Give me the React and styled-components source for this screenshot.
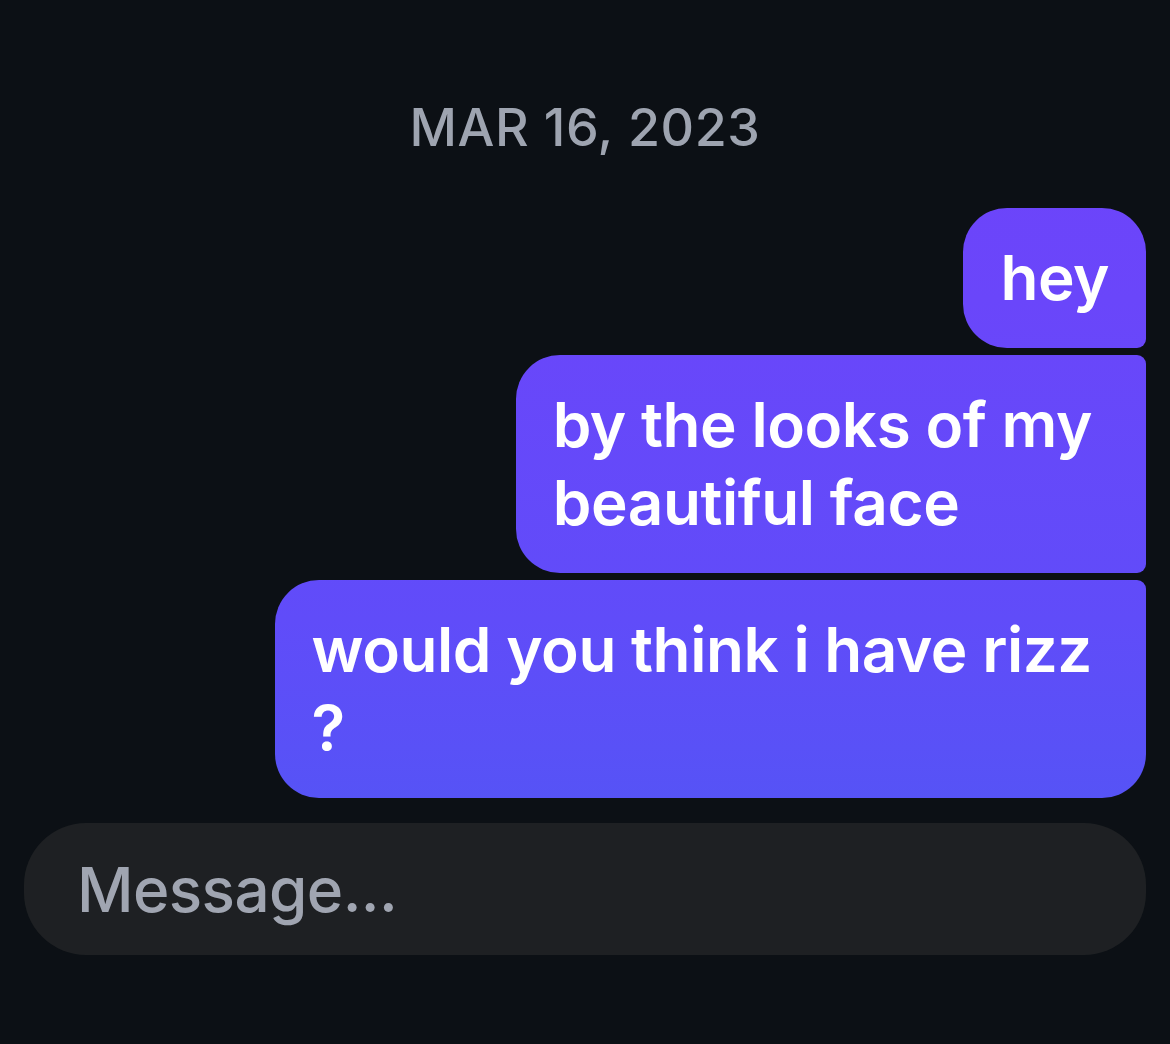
import React from "react";
import styled, { createGlobalStyle } from "styled-components";

const Global = createGlobalStyle`
  html, body { margin: 0; padding: 0; background: #0c1015; }
  body { font-family: Inter, "Noto Sans", "Liberation Sans", sans-serif; -webkit-font-smoothing: antialiased; }
`;

const Page = styled.div`
  min-height: 1044px;
  background: #0c1015;
  display: flex;
  flex-direction: column;
  padding: 102px 24px 0;
  box-sizing: border-box;
`;

const DateLabel = styled.div`
  text-align: center;
  color: #9ea4b0;
  font-size: 52px;
  line-height: 52px;
  font-weight: 500;
  letter-spacing: 0.6px;
  margin-bottom: 54px;
`;

const Thread = styled.div`
  display: flex;
  flex-direction: column;
  align-items: flex-end;
  gap: 7px;
`;

const big = "44px";
const small = "9px";

const Bubble = styled.div`
  box-sizing: border-box;
  max-width: 890px;
  padding: 31px ${({ $multi }) => ($multi ? "54px" : "37px")} 31px 37px;
  color: #ffffff;
  font-size: 62px;
  line-height: 78px;
  font-weight: 600;
  letter-spacing: -0.45px;
  white-space: nowrap;
  background: linear-gradient(180deg, #6f42fb 0px, #6a46fa 300px, #604cf9 620px, #5653f6 800px);
  background-attachment: fixed;
  border-radius: ${({ $pos }) =>
    $pos === "first"
      ? `${big} ${big} ${small} ${big}`
      : $pos === "middle"
      ? `${big} ${small} ${small} ${big}`
      : `${big} ${small} ${big} ${big}`};
`;

const Composer = styled.div`
  margin-top: 25px;
  height: 132px;
  border-radius: 62px;
  background: #1e2023;
  display: flex;
  align-items: center;
  padding: 0 53px;
`;

const Field = styled.input`
  flex: 1;
  border: none;
  outline: none;
  background: transparent;
  color: #fff;
  font-family: inherit;
  font-size: 62px;
  font-weight: 500;
  letter-spacing: -0.6px;
  padding: 0;
  &::placeholder { color: #a0a5b1; opacity: 1; }
`;

export default function App() {
  return (
    <>
      <Global />
      <Page>
        <DateLabel>MAR 16, 2023</DateLabel>
        <Thread>
          <Bubble $pos="first">hey</Bubble>
          <Bubble $pos="middle" $multi>by the looks of my<br />beautiful face</Bubble>
          <Bubble $pos="last" $multi>would you think i have rizz<br />?</Bubble>
        </Thread>
        <Composer>
          <Field placeholder="Message..." />
        </Composer>
      </Page>
    </>
  );
}
